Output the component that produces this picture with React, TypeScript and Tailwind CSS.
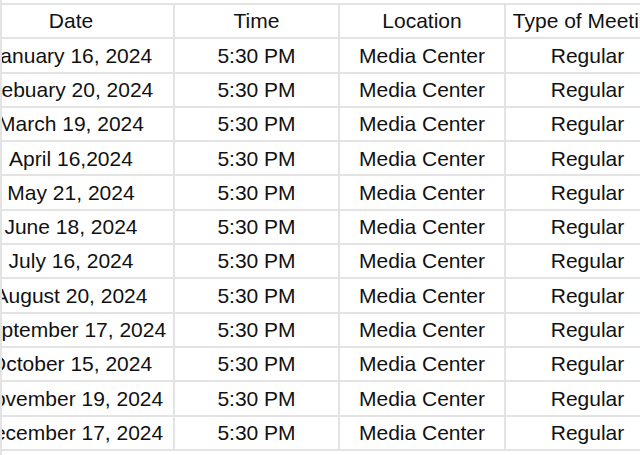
import React from "react";

const dates = [
  "January 16, 2024",
  "Febuary 20, 2024",
  "March 19, 2024",
  "April 16,2024",
  "May 21, 2024",
  "June 18, 2024",
  "July 16, 2024",
  "August 20, 2024",
  "September 17, 2024",
  "October 15, 2024",
  "November 19, 2024",
  "December 17, 2024",
];

const cell =
  "h-[34.3px] flex items-center justify-center whitespace-nowrap border-r-2 border-b-2 border-[#e3e3e3] overflow-hidden";

export default function App() {
  const rows = [["Date", "Time", "Location", "Type of Meeting"], ...dates.map((d) => [d, "5:30 PM", "Media Center", "Regular"])];
  return (
    <div
      className="w-[640px] h-[455px] overflow-hidden bg-white text-[21px] text-[#111]"
      style={{ fontFamily: '"Liberation Sans", Arial, sans-serif' }}
    >
      <div className="h-full border-l-2 border-[#e3e3e3] overflow-hidden">
        <div className="mt-[3px] ml-[-33px] w-[702px] grid grid-cols-[206px_165px_166px_165px] border-t-2 border-[#e3e3e3]">
          {rows.map((r, i) =>
            r.map((c, j) => (
              <div key={`${i}-${j}`} className={cell}>
                {c}
              </div>
            ))
          )}
        </div>
      </div>
    </div>
  );
}
